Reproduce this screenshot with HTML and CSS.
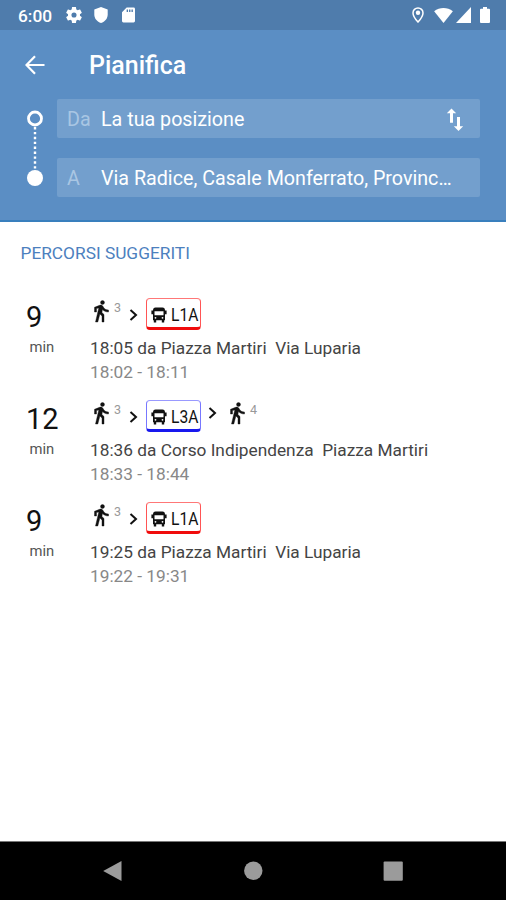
FILE: index.html
```html
<!DOCTYPE html>
<html lang="it">
<head>
<meta charset="utf-8">
<title>Pianifica</title>
<link rel="stylesheet" href="styles.css">
</head>
<body>
<svg class="defs" aria-hidden="true">
  <symbol id="walk" viewBox="0 0 24 24"><path stroke="currentColor" stroke-width=".4" d="M13.500 5.500c1.100 0 2-.9 2-2s-.9-2-2-2-2 .9-2 2 .9 2 2 2zM9.800 8.900L6.500 23h2.300l2.100-8 2.100 2v6h2v-7.500l-2.100-2 .6-3C14.800 12 16.800 13 19.500 13v-2c-2.400 0-4-1-4.800-2.400l-1-1.600c-.4-.6-1-1-1.700-1-.3 0-.5.1-.8.1L5.500 8.300V13h2V9.600l2.300-.7"/></symbol>
  <symbol id="chevron" viewBox="0 0 10 14"><path d="M1.500 2l5.500 5-5.500 5" fill="none" stroke="currentColor" stroke-width="2"/></symbol>
  <symbol id="bus" viewBox="0 0 16 16"><path fill-rule="evenodd" d="M4.500.5h7Q14 .5 14 3.500h1.600v3.800H14v6h-.8v2.200h-2.400v-2.200H5.200v2.200H2.800v-2.200H2v-6H.4V3.500H2Q2 .5 4.500.5zM3.500 4.200v4h9v-4zM4.500 9.900a.9.9 0 1 0 0 1.800.9.9 0 0 0 0-1.800zm7 0a.9.9 0 1 0 0 1.800.9.9 0 0 0 0-1.800z"/></symbol>
</svg>
<div class="screen">
  <div class="status">
    <span class="clock">6:00</span>
    <svg class="gear" viewBox="2 2 20 20"><path d="M19.430 12.980c.04-.32.07-.64.07-.98s-.03-.66-.07-.98l2.110-1.650c.19-.15.24-.42.12-.64l-2-3.460c-.12-.22-.39-.3-.61-.22l-2.490 1c-.52-.4-1.080-.73-1.690-.98l-.38-2.650C14.460 2.180 14.250 2 14 2h-4c-.25 0-.46.18-.49.42l-.38 2.650c-.61.25-1.170.59-1.690.98l-2.490-1c-.23-.09-.49 0-.61.22l-2 3.460c-.13.22-.07.49.12.64l2.110 1.650c-.04.32-.07.65-.07.98s.03.66.07.98l-2.110 1.650c-.19.15-.24.42-.12.64l2 3.460c.12.22.39.3.61.22l2.490-1c.52.4 1.080.73 1.690.98l.38 2.650c.03.24.24.42.49.42h4c.25 0 .46-.18.49-.42l.38-2.650c.61-.25 1.170-.59 1.690-.98l2.490 1c.23.09.49 0 .61-.22l2-3.460c.12-.22.07-.49-.12-.64zM12 15.200a3.200 3.200 0 1 1 0-6.400 3.200 3.200 0 0 1 0 6.400z"/></svg>
    <svg class="shield" viewBox="0 0 14 16"><path d="M7 0l6.700 2.500v5c0 4-2.800 7.300-6.700 8.500-3.900-1.200-6.700-4.500-6.700-8.500v-5z"/></svg>
    <svg class="card" viewBox="0 0 14 16"><path fill-rule="evenodd" d="M5 0h7.500A1.500 1.500 0 0 1 14 1.500v13a1.500 1.500 0 0 1-1.500 1.500h-11A1.500 1.500 0 0 1 0 14.500V5zM5 2.200v2.600h1.500V2.200zm2.600 0v2.600h1.500V2.200zm2.600 0v2.600h1.500V2.200z"/></svg>
    <svg class="pin" viewBox="0 0 12 16"><path d="M6 .9a5 5 0 0 0-5 5C1 9.500 6 15 6 15s5-5.500 5-9.100a5 5 0 0 0-5-5z" fill="none" stroke="currentColor" stroke-width="1.500"/><circle cx="6" cy="5.800" r="2.200"/></svg>
    <svg class="wifi" viewBox="0 0 20 16"><path d="M0 3.500C6-1.100 14-1.100 20 3.500L10 16z"/></svg>
    <svg class="signal" viewBox="0 0 15 16"><path d="M15 0v16H0z"/></svg>
    <svg class="battery" viewBox="0 0 10 16"><path d="M3 0h4v1.800h2q1 0 1 1V15q0 1-1 1H1q-1 0-1-1V2.800q0-1 1-1h2z"/></svg>
  </div>
  <header class="header">
    <div class="titlebar">
      <svg class="back" viewBox="0 0 20 20"><path d="M19.500 10H2M10 1.200L1.500 10l8.500 8.800" fill="none" stroke="currentColor" stroke-width="2.200"/></svg>
      <h1>Pianifica</h1>
    </div>
    <div class="planner">
      <svg class="route" viewBox="0 0 16 76"><circle cx="8" cy="8.500" r="6.500" fill="none" stroke="currentColor" stroke-width="2.800"/><path d="M8 17v43" fill="none" stroke="currentColor" stroke-width="2.400" stroke-dasharray="2.400 2.500"/><circle cx="8" cy="68" r="8"/></svg>
      <div class="fields">
        <div class="field"><span class="label">Da</span><span class="value">La tua posizione</span>
          <svg class="swap" viewBox="0 0 18 24"><path d="M5.500.5l4.700 4.700H7v9.600H4V5.200H.8zM11 9h3v9.300h3.200L12.500 23l-4.700-4.700H11z"/></svg>
        </div>
        <div class="field"><span class="label">A</span><span class="value">Via Radice, Casale Monferrato, Provinc…</span></div>
      </div>
    </div>
  </header>
  <main>
    <h2>PERCORSI SUGGERITI</h2>
    <section class="trip">
      <div class="duration"><div class="num">9</div><div class="unit">min</div></div>
      <div class="info">
        <div class="legs"><svg class="walk"><use href="#walk"/></svg><span class="mins">3</span><svg class="chev"><use href="#chevron"/></svg><span class="line red"><svg class="bus"><use href="#bus"/></svg><span class="code">L1A</span></span></div>
        <div class="stops">18:05 da Piazza Martiri&nbsp; Via Luparia</div>
        <div class="times">18:02 - 18:11</div>
      </div>
    </section>
    <section class="trip">
      <div class="duration"><div class="num">12</div><div class="unit">min</div></div>
      <div class="info">
        <div class="legs"><svg class="walk"><use href="#walk"/></svg><span class="mins">3</span><svg class="chev"><use href="#chevron"/></svg><span class="line blue"><svg class="bus"><use href="#bus"/></svg><span class="code">L3A</span></span><svg class="chev next"><use href="#chevron"/></svg><svg class="walk"><use href="#walk"/></svg><span class="mins">4</span></div>
        <div class="stops">18:36 da Corso Indipendenza&nbsp; Piazza Martiri</div>
        <div class="times">18:33 - 18:44</div>
      </div>
    </section>
    <section class="trip">
      <div class="duration"><div class="num">9</div><div class="unit">min</div></div>
      <div class="info">
        <div class="legs"><svg class="walk"><use href="#walk"/></svg><span class="mins">3</span><svg class="chev"><use href="#chevron"/></svg><span class="line red"><svg class="bus"><use href="#bus"/></svg><span class="code">L1A</span></span></div>
        <div class="stops">19:25 da Piazza Martiri&nbsp; Via Luparia</div>
        <div class="times">19:22 - 19:31</div>
      </div>
    </section>
  </main>
  <nav class="navbar">
    <svg viewBox="0 0 20 22"><path d="M.2 11L18.500 1v20z"/></svg>
    <svg viewBox="0 0 20 22"><circle cx="10.300" cy="10.700" r="9.200"/></svg>
    <svg viewBox="0 0 20 22"><rect x=".6" y="1.500" width="19.200" height="19.200" rx="1"/></svg>
  </nav>
</div>
</body>
</html>
```
FILE: styles.css
```css
* { box-sizing: border-box; }
body { margin: 0; font-family: Roboto, sans-serif; background: #fff; }
svg { display: block; fill: currentColor; flex: none; }
.defs { display: none; }
.screen { width: 506px; height: 900px; display: flex; flex-direction: column; overflow: hidden; }

.status { height: 30px; background: #4f7cac; color: #fff; display: flex; align-items: center; padding: 0 16px 0 18px; }
.clock { font-size: 17.3px; font-weight: 500; width: 48px; line-height: 30px; padding-top: 1px; }
.gear { width: 16px; height: 16px; margin-right: 12px; }
.shield { width: 14px; height: 16px; margin-right: 14px; }
.card { width: 13px; height: 16px; }
.pin { width: 12px; height: 16px; margin-left: auto; margin-right: 10px; }
.wifi { width: 19px; height: 15px; margin-right: 3px; }
.signal { width: 15px; height: 16px; margin-right: 9px; }
.battery { width: 10px; height: 16px; }

.header { height: 192px; background: #5b8ec4; color: #fff; border-bottom: 2px solid #397fbd; }
.titlebar { height: 69px; display: flex; align-items: center; padding-left: 25px; }
.back { width: 20px; height: 20px; margin-right: 44px; }
h1 { margin: 3px 0 0; font-size: 25px; font-weight: 500; line-height: 30px; }
.planner { display: flex; padding-left: 27px; }
.route { width: 16px; height: 76px; margin: 11px 14px 0 0; }
.fields { width: 423px; display: grid; gap: 20px; }
.field { height: 39px; border-radius: 2px; background: #739fcd; display: flex; align-items: center; padding: 2px 16px 0 10px; font-size: 19.7px; white-space: nowrap; }
.label { width: 34px; color: #a9c6e3; }
.swap { width: 18px; height: 24px; margin-left: auto; }

main { flex: 1; padding: 20px 20px 0; }
h2 { margin: 0 0 47px .5px; color: #4c80be; font-size: 17.3px; font-weight: 400; line-height: 22px; }
.trip { height: 102px; display: flex; margin-top: -13px; margin-bottom: 13px; }
.duration { width: 70px; }
.num { font-size: 29px; line-height: 36px; color: #111; padding: 1px 0 0 6px; }
.unit { font-size: 14.8px; line-height: 20px; color: #555; padding-left: 9.5px; margin-top: 2px; }
.legs { display: flex; height: 38px; color: #111; }
.walk { width: 24px; height: 24px; margin: 1px 0 0 -1px; }
.mins { font-size: 12.5px; line-height: 14px; color: #999; width: 9px; margin: 3px 0 0 1px; }
.chev { width: 10px; height: 14px; margin: 10px 7px 0 6px; }
.line { width: 55px; height: 32px; display: flex; align-items: center; border: 1px solid; border-bottom-width: 3px; border-radius: 4px; padding: 4px 0 0 4px; }
.code { color: #111; font-size: 19px; line-height: 22px; margin-left: 4px; transform: scaleX(.82); transform-origin: left; }
.bus { width: 16px; height: 16px; color: #111; }
.red { border-color: #ff7777 #ff5555 #f00c0c; }
.blue { border-color: #9999ff #7777ff #1818ee; }
.chev.next { margin: 6px 8px 0 7px; }
.stops { font-size: 17.28px; line-height: 24px; color: #444; white-space: pre; }
.times { font-size: 17.28px; line-height: 24px; color: #888; }

.navbar { height: 59px; background: #000; border-top: 1px solid #777; color: #9b9b9b; display: flex; justify-content: space-between; padding: 18px 103px 0; }
.navbar svg { width: 20px; height: 22px; }
```
